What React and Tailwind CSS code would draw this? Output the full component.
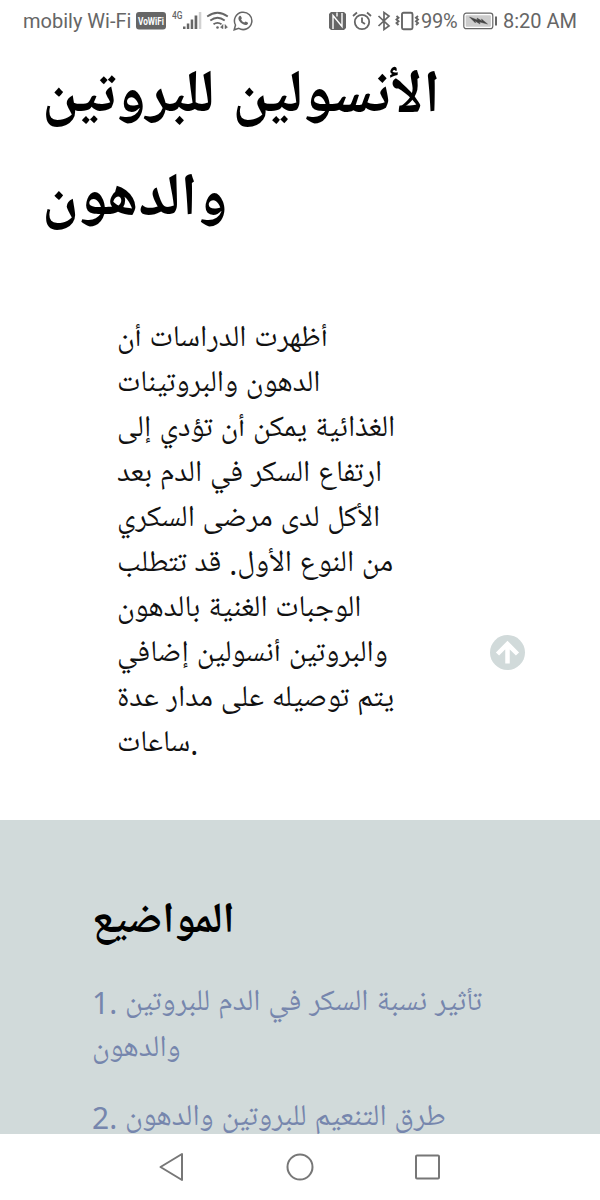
import React from "react";

const intro = [
  "أظهرت الدراسات أن",
  "الدهون والبروتينات",
  "الغذائية يمكن أن تؤدي إلى",
  "ارتفاع السكر في الدم بعد",
  "الأكل لدى مرضى السكري",
  "من النوع الأول. قد تتطلب",
  "الوجبات الغنية بالدهون",
  "والبروتين أنسولين إضافي",
  "يتم توصيله على مدار عدة",
  "ساعات.",
];

function StatusBar() {
  return (
    <header className="flex h-[42px] shrink-0 items-center justify-between pl-[23px] pr-[24px] font-[Roboto,sans-serif] text-[20px] text-[#666]">
      <div className="flex items-center">
        <span className="w-[110px] whitespace-nowrap">mobily Wi-Fi</span>
        <svg className="ml-[3px]" width="30" height="18" viewBox="0 0 30 18">
          <rect width="30" height="17.500" rx="3" fill="currentColor" />
          <text x="2" y="13" fontSize="11.500" fontWeight="700" textLength="26" lengthAdjust="spacingAndGlyphs" fill="#fff">VoWiFi</text>
        </svg>
        <svg className="ml-[6px]" width="30" height="22" viewBox="0 0 30 22" fill="currentColor">
          <text x="0" y="9" fontSize="11.500" fontWeight="500" textLength="10.500" lengthAdjust="spacingAndGlyphs">4G</text>
          <path d="M11 16.500h2.500V19H11zM14.800 13.500h2.500V19h-2.500zM18.700 9.500h2.500V19h-2.500zM22.600 5.500h2.700V19h-2.700z" />
          <path d="M26.800 2h2.500v17h-2.500z" opacity=".3" />
        </svg>
        <svg className="ml-[4px]" width="24" height="22" viewBox="0 0 24 22" fill="none" stroke="currentColor" strokeWidth="1.800">
          <path d="M1.200 6.500q10.300-7.500 20.600 0M4.300 10.500q7.200-5.500 14.400 0M7.500 14.300q4-3 8 0" />
          <circle cx="11.500" cy="17.500" r="1.300" fill="currentColor" stroke="none" />
          <path d="m17 14.500-2.500 2.800 2.500 1.500ZM19 14.500l2.500 2.800-2.500 1.500Z" fill="currentColor" strokeWidth=".5" />
        </svg>
        <svg className="ml-[3px]" width="20" height="20" viewBox="0 0 20 20">
          <path d="M1.200 18.800 2.500 14a8.700 8.700 0 1 1 3.300 3.400Z" fill="none" stroke="currentColor" strokeWidth="1.500" />
          <path d="M6.300 5.200c.7-.6 1.500-.5 1.800.2l.7 1.600c.2.500-.7 1.300-.7 1.500.7 1.500 1.800 2.500 3.200 3 .4 0 1-1.200 1.400-1l2 .9c.7.4.2 1.900-.7 2.400-3.200 1.500-8.800-3.400-8.600-6.500.1-.9.400-1.700.9-2.100Z" fill="currentColor" />
        </svg>
      </div>
      <div className="flex items-center">
        <svg width="19" height="20" viewBox="0 0 19 20">
          <path d="M3 1h13l2 2v14l-2 2H3l-2-2V3Z" fill="currentColor" />
          <path d="M5 18V4.500L14 15.500V2M9 1.500v4" fill="none" stroke="#fff" strokeWidth="1.400" />
        </svg>
        <svg className="ml-[5px]" width="20" height="20" viewBox="0 0 20 20" fill="none" stroke="currentColor" strokeWidth="1.800">
          <circle cx="10" cy="11" r="7.200" /><path d="M10 6.500V11l3 2M1 5l4-3.500M19 5l-4-3.500" />
        </svg>
        <svg className="ml-[5px]" width="14" height="20" viewBox="0 0 14 20" fill="none" stroke="currentColor" strokeWidth="1.700">
          <path d="m1.500 5 10.500 10-5 3.500v-17L12 5 1.500 15" />
        </svg>
        <svg className="ml-[4px]" width="26" height="20" viewBox="0 0 26 20" fill="none" stroke="currentColor" strokeWidth="1.900">
          <rect x="7" y="1.800" width="10.500" height="16.500" rx="1.500" />
          <path d="m1.500 5 2 1.700-2 1.800 2 1.700-2 1.800 2 2M23 5l-2 1.700 2 1.800-2 1.700 2 1.800-2 2" />
        </svg>
        <span className="w-[38px] whitespace-nowrap text-[20px] tracking-[-0.3px]">99%</span>
        <svg className="ml-[4px]" width="35" height="18" viewBox="0 0 35 18">
          <rect x=".8" y="1.200" width="29" height="15.500" rx="2.500" fill="#fff" stroke="currentColor" strokeWidth="1.200" />
          <rect x="2.700" y="3.200" width="25.200" height="11.500" rx="1" fill="#ccc" />
          <path d="m6.500 5 8 3-.5-2 5 3-.5-2 6 5-8-2 .5 2-5-3 .5 2Z" fill="#444" stroke="#444" strokeWidth=".4" />
          <path d="M32 4.500h2v9h-2z" fill="currentColor" />
        </svg>
        <span className="ml-[5px] w-[73px] whitespace-nowrap">8:20 AM</span>
      </div>
    </header>
  );
}

export default function App() {
  return (
    <div className="flex h-[1200px] w-[600px] flex-col overflow-hidden bg-white font-['Noto_Sans','Noto_Naskh_Arabic_UI','Noto_Naskh_Arabic','DejaVu_Sans',sans-serif]" dir="ltr">
      <StatusBar />
      <main className="flex h-[1092px] flex-col overflow-hidden">
        <h1 className="flex flex-col pl-[42px] pt-1 text-[60px] font-bold leading-[103px] text-black [word-spacing:2px]">
          <span className="w-fit whitespace-nowrap">الأنسولين للبروتين</span>
          <span className="w-fit whitespace-nowrap">والدهون</span>
        </h1>
        <div className="mt-[64px] flex h-[504px] shrink-0 items-start justify-between pl-[117px] pr-[75px]">
          <p className="flex flex-col text-[30px] leading-[45px] text-[#111]">
            {intro.map((line) => (
              <span key={line} className="w-fit whitespace-nowrap">{line}</span>
            ))}
          </p>
          <button className="mt-[319px] flex size-[35px] shrink-0 items-center justify-center rounded-full bg-[#d1dada]">
            <svg width="25" height="25" viewBox="0 0 25 25" fill="none" stroke="#fff" strokeWidth="4.500">
              <path d="M12.500 23.500V4M2.500 14l10-10 10 10" />
            </svg>
          </button>
        </div>
        <section className="flex h-[400px] shrink-0 flex-col bg-[#d1dada] pl-[92px] pt-[75px]">
          <h2 className="w-fit whitespace-nowrap text-[43px] font-bold leading-[54px] text-black">المواضيع</h2>
          <ol className="mt-[31px] flex flex-col gap-[23px] text-[30px] leading-[46px] text-[#7686ad]">
            <li className="flex flex-col">
              <span className="w-fit whitespace-nowrap">1. تأثير نسبة السكر في الدم للبروتين</span>
              <span className="w-fit whitespace-nowrap">والدهون</span>
            </li>
            <li className="w-fit whitespace-nowrap">2. طرق التنعيم للبروتين والدهون</li>
          </ol>
        </section>
      </main>
      <nav className="flex h-[66px] shrink-0 items-center bg-white pl-[157px] text-[#777]">
        <svg width="28" height="30" viewBox="0 0 28 30" fill="none" stroke="currentColor" strokeWidth="2" strokeLinejoin="round"><path d="M25 2v26L3.500 15Z" /></svg>
        <svg className="ml-[101px]" width="28" height="28" viewBox="0 0 28 28" fill="none" stroke="currentColor" strokeWidth="2"><circle cx="14" cy="14" r="12.500" /></svg>
        <svg className="ml-[100px]" width="26" height="26" viewBox="0 0 26 26" fill="none" stroke="currentColor" strokeWidth="2"><rect x="2" y="1.500" width="23" height="23" rx="1" /></svg>
      </nav>
    </div>
  );
}
